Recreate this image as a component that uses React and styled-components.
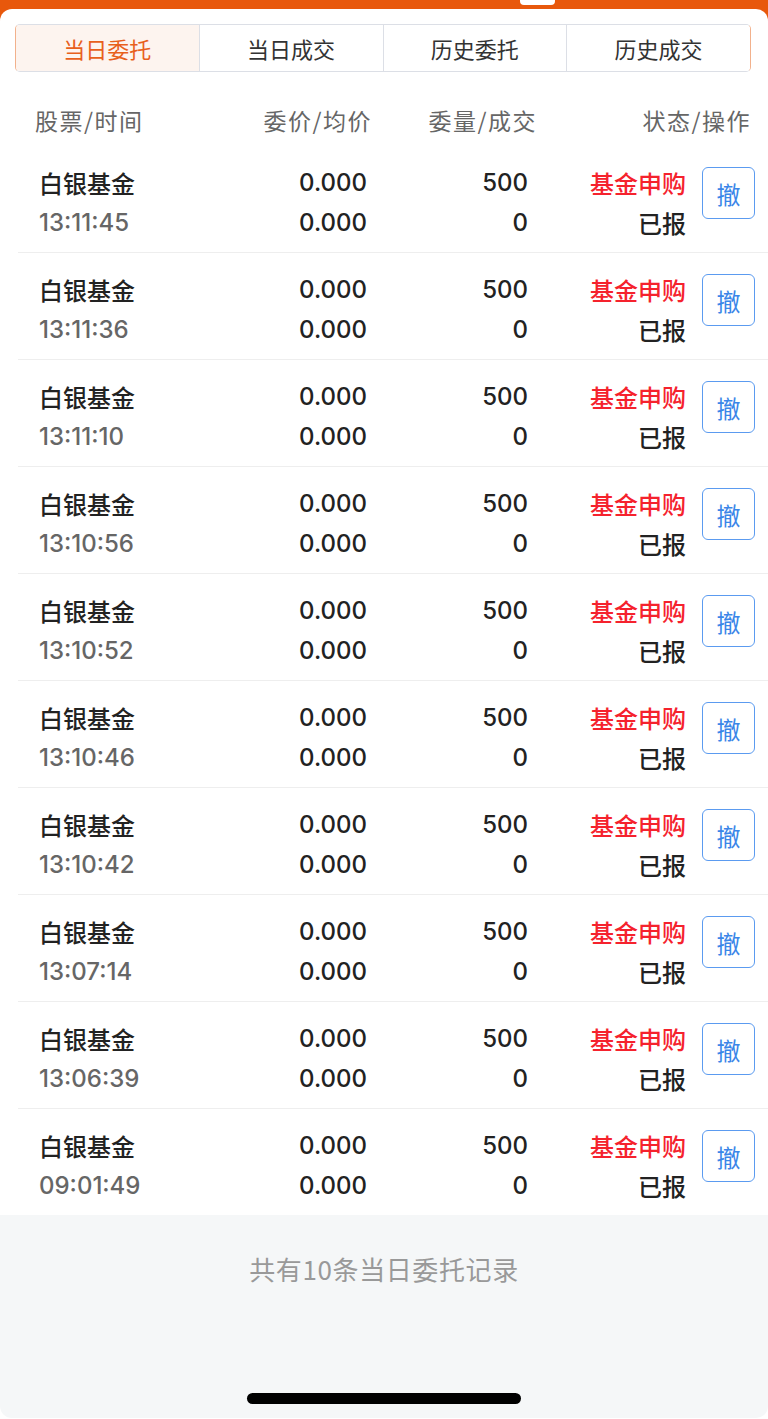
import React, { useState } from "react"
import styled, { createGlobalStyle } from "styled-components"

const GlobalStyle = createGlobalStyle`
  * { box-sizing: border-box; }
  body {
    margin: 0;
    background: #ffffff;
    font-family: "Inter", "Noto Sans CJK SC", sans-serif;
  }
`

const Screen = styled.div`
  position: relative;
  width: 768px;
  min-height: 1419px;
  display: flex;
  flex-direction: column;
  background: linear-gradient(#e8580c 0 30px, #ffffff 30px);
`

const Handle = styled.div`
  position: absolute;
  top: -3px;
  left: 520px;
  width: 35px;
  height: 8px;
  border-radius: 4px;
  background: #ffffff;
`

const Panel = styled.div`
  margin-top: 9px;
  flex: 1;
  display: flex;
  flex-direction: column;
  background: #ffffff;
  border-radius: 12px 12px 0 0;
`

const Tabs = styled.div`
  margin: 15px 17px 0 15px;
  height: 48px;
  display: flex;
  border: 1px solid #dcdfe6;
  border-left-color: #f2b18c;
  border-right-color: #f2b18c;
  border-radius: 5px;
  overflow: hidden;
`

const Tab = styled.div`
  flex: 1;
  display: flex;
  align-items: center;
  justify-content: center;
  font-family: "Noto Sans CJK SC", sans-serif;
  font-size: 22px;
  color: ${p => (p.$active ? "#e8601c" : "#333333")};
  background: ${p => (p.$active ? "#fdf4ef" : "#ffffff")};
  border-left: ${p => (p.$first ? "none" : "1px solid #dcdfe6")};
`

const Header = styled.div`
  height: 74px;
  padding: 24px 17px 2px 35px;
  display: grid;
  grid-template-columns: 1fr 165px 165px 214px;
  align-items: center;
  font-family: "Noto Sans CJK SC", sans-serif;
  font-size: 23px;
  color: #666666;
  letter-spacing: 1.5px;
`

const HeadCell = styled.div`
  text-align: ${p => p.$align || "right"};
  line-height: 48px;
`

const Row = styled.div`
  margin-left: 18px;
  padding: 17px 13px 9px 21px;
  display: grid;
  grid-template-columns: 170px 158px 161px 158px 1fr;
  border-bottom: ${p => (p.$last ? "none" : "1px solid #eeeeee")};
`

const Cell = styled.div`
  display: flex;
  flex-direction: column;
  align-items: ${p => (p.$left ? "flex-start" : "flex-end")};
  font-size: 24px;
  font-weight: 500;
  line-height: 40px;
  color: #222222;
`

const Name = styled.span`
  font-family: "Noto Sans CJK SC", sans-serif;
`

const Time = styled.span`
  color: #666666;
`

const Status = styled.span`
  font-family: "Noto Sans CJK SC", sans-serif;
  color: ${p => p.$color || "#222222"};
`

const CancelButton = styled.button`
  justify-self: end;
  margin-top: 4px;
  width: 53px;
  height: 52px;
  padding: 0;
  border: 1px solid #5b9bf0;
  border-radius: 6px;
  background: #ffffff;
  color: #3a86e8;
  font-family: "Noto Sans CJK SC", sans-serif;
  font-size: 24px;
  cursor: pointer;
`

const Footer = styled.div`
  height: 203px;
  display: flex;
  flex-direction: column;
  align-items: center;
  padding: 38px 0 14px;
  background: #f5f7f8;
  border-radius: 0 0 12px 12px;
`

const FooterText = styled.div`
  font-family: "Noto Sans CJK SC", sans-serif;
  font-size: 26px;
  line-height: 32px;
  letter-spacing: 0.6px;
  color: #999999;
`

const HomeBar = styled.div`
  margin-top: auto;
  width: 274px;
  height: 11px;
  border-radius: 6px;
  background: #000000;
`

const times = [
  "13:11:45", "13:11:36", "13:11:10", "13:10:56", "13:10:52",
  "13:10:46", "13:10:42", "13:07:14", "13:06:39", "09:01:49",
]

const tabs = ["当日委托", "当日成交", "历史委托", "历史成交"]

export default function App() {
  const [active, setActive] = useState(0)

  return (
    <Screen>
      <GlobalStyle />
      <Handle />
      <Panel>
        <Tabs>
          {tabs.map((t, i) => (
            <Tab key={t} $active={i === active} $first={i === 0} onClick={() => setActive(i)}>
              {t}
            </Tab>
          ))}
        </Tabs>
        <Header>
          <HeadCell $align="left">股票/时间</HeadCell>
          <HeadCell>委价/均价</HeadCell>
          <HeadCell>委量/成交</HeadCell>
          <HeadCell>状态/操作</HeadCell>
        </Header>
        {times.map((t, i) => (
          <Row key={t} $last={i === times.length - 1}>
            <Cell $left>
              <Name>白银基金</Name>
              <Time>{t}</Time>
            </Cell>
            <Cell>
              <span>0.000</span>
              <span>0.000</span>
            </Cell>
            <Cell>
              <span>500</span>
              <span>0</span>
            </Cell>
            <Cell>
              <Status $color="#f5222d">基金申购</Status>
              <Status>已报</Status>
            </Cell>
            <CancelButton>撤</CancelButton>
          </Row>
        ))}
        <Footer>
          <FooterText>共有10条当日委托记录</FooterText>
          <HomeBar />
        </Footer>
      </Panel>
    </Screen>
  )
}
